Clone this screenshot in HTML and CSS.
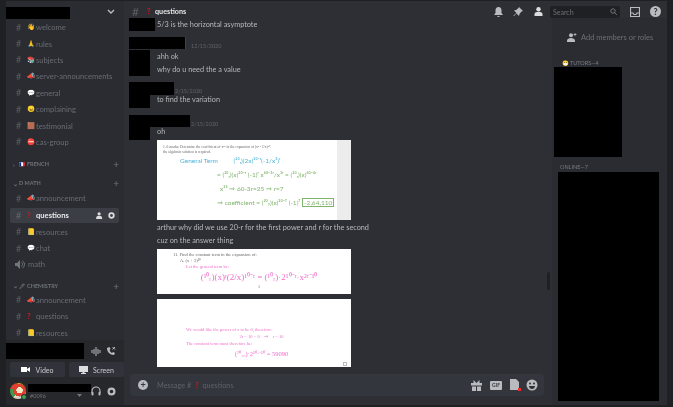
FILE: index.html
```html
<!DOCTYPE html>
<html lang="en">
<head>
    <meta charset="UTF-8">
    <title>questions</title>
    <link rel="stylesheet" href="styles.css">
</head>
<body>
    <div class="app">
        <aside class="sidebar">
            <div class="server-head">
                <div class="black server-name"></div>
                <svg class="chev" width="8" height="6" viewBox="0 0 8 6"><path d="M1 1l3 3 3-3" fill="none" stroke="#b9bbbe" stroke-width="1.4"/></svg>
            </div>
            <div class="channels">
                <div class="chan"><span class="hash">#</span><span class="emo">👋</span>welcome</div>
                <div class="chan"><span class="hash">#</span><span class="emo">🙏</span>rules</div>
                <div class="chan"><span class="hash">#</span><span class="emo">📚</span>subjects</div>
                <div class="chan"><span class="hash">#</span><span class="emo">📣</span>server-announcements</div>
                <div class="chan"><span class="hash">#</span><span class="emo">💬</span>general</div>
                <div class="chan"><span class="hash">#</span><span class="emo">😠</span>complaining</div>
                <div class="chan"><span class="hash">#</span><span class="emo">🟫</span>testimonial</div>
                <div class="chan"><span class="hash">#</span><span class="emo">⛔</span>cas-group</div>

                <div class="cat cat-fr"><span class="caret">›</span><span class="cat-emo">🇫🇷</span>FRENCH<span class="plus">+</span></div>
                <div class="cat"><span class="caret">⌄</span>D MATH<span class="plus">+</span></div>
                <div class="chan"><span class="hash">#</span><span class="emo">📣</span>announcement</div>
                <div class="chan active"><span class="hash">#</span><span class="emo red">?</span>questions
                    <span class="row-icons">
                        <svg width="8" height="7" viewBox="0 0 9 8"><circle cx="3.5" cy="2" r="1.8" fill="#dcddde"/><path d="M0 8c0-3 1.500-3.600 3.500-3.600S7 5 7 8z" fill="#dcddde"/></svg>
                        <svg width="7" height="7" viewBox="0 0 8 8"><circle cx="4" cy="4" r="2.600" fill="none" stroke="#dcddde" stroke-width="2"/></svg>
                    </span>
                </div>
                <div class="chan"><span class="hash">#</span><span class="emo">📒</span>resources</div>
                <div class="chan"><span class="hash">#</span><span class="emo">💬</span>chat</div>
                <div class="chan voice">
                    <svg class="speaker" width="10" height="9" viewBox="0 0 10 9"><path d="M0 3h2l3-3v9L2 6H0z" fill="#72767d"/><path d="M6.500 2.500a2.500 2.500 0 010 4M7.500 1a4 4 0 010 7" fill="none" stroke="#72767d"/></svg>math
                </div>

                <div class="cat cat-chem"><span class="caret">⌄</span><span class="cat-emo">🖊</span>CHEMISTRY<span class="plus">+</span></div>
                <div class="chan"><span class="hash">#</span><span class="emo">📣</span>announcement</div>
                <div class="chan"><span class="hash">#</span><span class="emo red">?</span>questions</div>
                <div class="chan"><span class="hash">#</span><span class="emo">📒</span>resources</div>
            </div>

            <div class="voice-panel">
                <div class="voice-top">
                    <div class="black voice-name"></div>
                    <svg width="10" height="9" viewBox="0 0 10 9"><path d="M1 3v3M3 2v5M5 0v9M7 2v5M9 3v3" stroke="#b9bbbe" fill="none"/></svg>
                    <svg width="10" height="10" viewBox="0 0 10 10"><path d="M1 2c0 4 3 7 7 7l1-2-2-1-1 1C5 6.500 4 5.500 3.500 4l1-1-1-2z" fill="#b9bbbe"/><path d="M6.500 1l2.500 2.500M9 1L6.500 3.500" stroke="#b9bbbe"/></svg>
                </div>
                <div class="voice-btns">
                    <div class="vbtn"><svg width="9" height="7" viewBox="0 0 9 7"><path d="M0 1h6v5H0zM6 3l3-2v5L6 4z" fill="#fff"/></svg>Video</div>
                    <div class="vbtn"><svg width="9" height="8" viewBox="0 0 9 8"><path d="M0 0h9v6H5.500v1H7v1H2V7h1.500V6H0z" fill="#dcddde"/></svg>Screen</div>
                </div>
            </div>

            <div class="user-bar">
                <div class="avatar"><i class="status"></i></div>
                <div class="user-text">
                    <div class="black user-name"></div>
                    <div class="user-tag">#0096</div>
                </div>
                <svg class="user-caret" width="7" height="5" viewBox="0 0 7 5"><path d="M1 1l2.500 3L6 1z" fill="#72767d"/></svg>
                <svg width="10" height="10" viewBox="0 0 10 10"><path d="M1 7V5a4 4 0 018 0v2" fill="none" stroke="#b9bbbe" stroke-width="1.200"/><rect x=".5" y="6" width="2" height="3.500" rx=".8" fill="#b9bbbe"/><rect x="7.500" y="6" width="2" height="3.500" rx=".8" fill="#b9bbbe"/></svg>
                <svg width="9" height="9" viewBox="0 0 9 9"><circle cx="4.500" cy="4.500" r="2.900" fill="none" stroke="#b9bbbe" stroke-width="2.200"/></svg>
            </div>
        </aside>

        <div class="main">
            <header class="topbar">
                <span class="top-hash">#</span><span class="top-q">?</span><span class="top-title">questions</span>
                <div class="top-right">
                    <svg width="9" height="10" viewBox="0 0 9 10"><path d="M4.500 0c2 0 3 1.500 3 3.500V6L9 8H0l1.500-2V3.500C1.500 1.500 2.500 0 4.500 0zM3.500 9h2v1h-2z" fill="#b9bbbe"/></svg>
                    <svg width="10" height="10" viewBox="0 0 10 10"><path d="M6 0l4 4-1.500.5L6.500 7 6 9 3.500 6.500 1 9 .5 9 .5 8.500l3-2.500L1 3.500 3 3l2.500-2z" fill="#b9bbbe"/></svg>
                    <svg width="11" height="9" viewBox="0 0 11 9"><circle cx="5.500" cy="2.300" r="2.200" fill="#dcddde"/><path d="M1.500 9V7c0-1.500 2-2.300 4-2.300s4 .8 4 2.300v2z" fill="#dcddde"/></svg>
                    <div class="search"><span>Search</span><svg width="7" height="7" viewBox="0 0 7 7"><circle cx="3" cy="3" r="2.200" fill="none" stroke="#72767d"/><path d="M4.500 4.500L6.800 6.800" stroke="#72767d"/></svg></div>
                    <svg width="10" height="10" viewBox="0 0 10 10"><path d="M.5.500h9v9h-9zM.5 6h2.500l1 1.500h2l1-1.500h2.500" fill="none" stroke="#b9bbbe" stroke-width="1.200"/></svg>
                    <div class="help">?</div>
                </div>
            </header>

            <div class="body-row">
                <section class="chat">
                    <div class="messages">
                        <div class="first">
                            <div class="black blk-top"></div>
                            <p class="m-first">5/3 is the horizontal asymptote</p>
                        </div>
                        <div class="m-ahh">
                            <div class="msg-head"><div class="black nm-a"></div><span class="time">12/15/2020</span></div>
                            <div class="msg-body"><div class="black av"></div><div class="lines"><p>ahh ok</p><p>why do u need the a value</p></div></div>
                        </div>
                        <div class="m-find">
                            <div class="msg-head"><div class="black nm-b"></div><span class="time tight">2/15/2020</span></div>
                            <div class="msg-body"><div class="black av short"></div><div class="lines up"><p>to find the variation</p></div></div>
                        </div>
                        <div class="m-oh">
                            <div class="msg-head"><div class="black nm-c"></div><span class="time tight">2/15/2020</span></div>
                            <div class="msg-body"><div class="black av short"></div><div class="lines up"><p>oh</p></div></div>
                            <div class="attach">
                                <div class="sheet green-sheet">
                                    <div class="print">1. 6 marks: Determine the coefficient of x²⁵ in the expansion of (x² - 2/x)²⁰.</div>
                                    <div class="print">the algebraic solution is required.</div>
                                    <div class="hand blue">General Term <b>(²⁰ᵣ)(2x)²⁰⁻ʳ(-1/x³)ʳ</b></div>
                                    <div class="hand l2">= (²⁰ᵣ)(x)²⁰⁻ʳ (-1)ʳ x⁶⁰⁻³ʳ/x³ʳ = (²⁰ᵣ)(x)⁶⁰⁻⁴ʳ</div>
                                    <div class="hand l3">x²⁵ ⇒ 60-3r=25 ⇒ r=7</div>
                                    <div class="hand l2">⇒ coefficient = (²⁰₇)(x)²⁰⁻⁷ (-1)⁷ <span class="boxed">-2,64,110</span></div>
                                </div>
                                <p>arthur why did we use 20-r for the first power and r for the second</p>
                                <p>cuz on the answer thing</p>
                                <div class="sheet pink-top">
                                    <div class="print">11. Find the constant term in the expansion of:</div>
                                    <div class="print ind">A. (x + 2)¹⁰</div>
                                    <div class="pink ind2">Let the general term be:</div>
                                    <div class="pink center big wide">(¹⁰ᵣ)(x)ʳ(2/x)¹⁰⁻ʳ = (¹⁰ᵣ)·2¹⁰⁻ʳ·x²ʳ⁻¹⁰</div>
                                    <div class="pagenum">1</div>
                                </div>
                                <div class="sheet pink-bot">
                                    <div class="pink ind3">We would like the power of x to be 0, therefore:</div>
                                    <div class="pink center">2r − 10 = 0 &nbsp;&nbsp; ⇒ &nbsp;&nbsp; r = 10</div>
                                    <div class="pink ind3">The constant term must therefore be:</div>
                                    <div class="pink center big">(²⁰₁₀)·2¹⁰·⁻¹⁰ = 59090</div>
                                    <i class="corner"></i>
                                </div>
                            </div>
                        </div>
                    </div>
                    <div class="composer">
                        <div class="add">+</div>
                        <div class="placeholder">Message #<span class="q">?</span>questions</div>
                        <div class="comp-icons">
                            <svg width="11" height="11" viewBox="0 0 11 11"><path d="M0 3h11v2.500H0zM1 6.500h4V11H1zM6 6.500h4V11H6zM2.500 0l3 3h-3zM8.500 0l-3 3h3z" fill="#b9bbbe"/></svg>
                            <div class="gif">GIF</div>
                            <div class="file"><svg width="10" height="12" viewBox="0 0 10 12"><path d="M0 0h6l3 3v8H0z" fill="#b9bbbe"/></svg><i></i></div>
                            <svg class="smile" width="12" height="12" viewBox="0 0 12 12"><circle cx="6" cy="6" r="5.500" fill="#b9bbbe"/><circle cx="4" cy="4.500" r="1" fill="#2f3136"/><circle cx="8" cy="4.500" r="1" fill="#2f3136"/><path d="M3 7h6c0 2-1.500 3-3 3s-3-1-3-3z" fill="#2f3136"/></svg>
                        </div>
                    </div>
                    <div class="scroll-thumb"></div>
                </section>

                <aside class="members">
                    <div class="add-members">
                        <svg width="10" height="9" viewBox="0 0 10 9"><circle cx="4" cy="2.200" r="2" fill="#b9bbbe"/><path d="M0 9V7.500C0 6 2 5 4 5s4 1 4 2.500V9z" fill="#b9bbbe"/><path d="M8 0v3M6.500 1.500h3" stroke="#b9bbbe" stroke-width=".8"/></svg>
                        <span>Add members or roles</span>
                    </div>
                    <div class="group-title tutors-title"><span class="emo-s">😷</span>TUTORS—4</div>
                    <div class="black tutors"></div>
                    <div class="group-title online">ONLINE—7</div>
                    <div class="black online-list"></div>
                </aside>
            </div>
        </div>
    </div>
</body>
</html>
```

FILE: styles.css
```css
* {
    box-sizing: border-box;
}
html, body {
    margin: 0;
    height: 100%;
    overflow: hidden;
}
body {
    font-family: Lato, "Open Sans", sans-serif;
    background: #1f2023;
    color: #b9bbbe;
    filter: blur(0.5px);
}
p {
    margin: 0;
}
.black {
    background: #000;
}
.app {
    display: flex;
    height: 405px;
    padding: 1px 6px 0;
}

/* left column */
.sidebar {
    width: 118px;
    display: flex;
    flex-direction: column;
    background: #2a2c31;
    flex: none;
}
.server-head {
    height: 18px;
    flex: none;
    display: flex;
    align-items: flex-start;
    justify-content: space-between;
    padding: 6px 9px 0 0;
}
.server-name {
    width: 64px;
    height: 12px;
}
.chev {
    margin-top: 2px;
}
.channels {
    flex: 1;
    padding-left: 4px;
    overflow: hidden;
}
.chan {
    height: 16.4px;
    display: flex;
    align-items: center;
    font-size: 7.600px;
    color: #686c72;
    white-space: nowrap;
}
.hash {
    width: 17px;
    padding-left: 6px;
    font-size: 9px;
    color: #5a5d63;
}
.emo {
    width: 9px;
    font-size: 6.500px;
}
.emo.red {
    color: #d9141c;
    font-weight: 700;
    font-size: 8px;
}
.chan.active {
    background: #3b3e44;
    border-radius: 2px;
    color: #e8e9ea;
    width: 109px;
    height: 15px;
    margin: 1px 0;
    font-weight: 700;
}
.row-icons {
    margin-left: auto;
    margin-right: 4px;
    display: flex;
    align-items: center;
    gap: 4px;
}
.voice {
    padding-left: 5px;
}
.speaker {
    margin-right: 3px;
}
.cat {
    height: 14px;
    margin-top: 5px;
    margin-right: 5px;
    display: flex;
    align-items: center;
    font-size: 5.500px;
    font-weight: 700;
    color: #6f7379;
}
.cat-fr {
    margin-top: 7px;
}
.cat-chem {
    height: 12px;
    margin-top: 7px;
}
.caret {
    width: 6px;
    margin-left: 3px;
    font-size: 6px;
}
.cat-emo {
    font-size: 5px;
    margin-right: 2px;
}
.plus {
    margin-left: auto;
    font-size: 10px;
    font-weight: 400;
    color: #72767d;
}
.voice-panel {
    height: 37px;
    flex: none;
    background: #26282c;
    padding-top: 3px;
}
.voice-top {
    display: flex;
    align-items: center;
    gap: 5px;
}
.voice-name {
    width: 78px;
    height: 16px;
    margin-right: 2px;
}
.voice-btns {
    display: flex;
    gap: 4px;
    padding: 3px 0 0 4px;
}
.vbtn {
    flex: 1;
    height: 15px;
    background: #30333a;
    border-radius: 2px;
    display: flex;
    align-items: center;
    justify-content: center;
    gap: 5px;
    font-size: 7px;
    color: #c8c9cb;
}
.user-bar {
    height: 28px;
    flex: none;
    background: #26282c;
    display: flex;
    align-items: center;
    gap: 6px;
    padding: 0 3px 0 4px;
    position: relative;
}
.avatar {
    width: 16px;
    height: 16px;
    border-radius: 50%;
    background:
        radial-gradient(circle at 60% 45%, #f2e9c9 0 24%, #e0402e 25% 48%, transparent 49%),
        conic-gradient(#e9c23a 0 30%, #d9d4c3 30% 60%, #3d9b49 60% 80%, #e0402e 80% 100%);
    position: relative;
    flex: none;
    margin-right: -4px;
}
.status {
    position: absolute;
    right: -1px;
    bottom: -1px;
    width: 6px;
    height: 6px;
    border-radius: 50%;
    background: #3ba55d;
    border: 1px solid #26282c;
}
.user-text {
    width: 63px;
    padding-top: 1px;
    margin-right: -6px;
}
.user-name {
    width: 63px;
    height: 8px;
}
.user-tag {
    font-size: 5.500px;
    line-height: 8px;
    color: #6f7379;
    margin-left: 2px;
}
.user-caret {
    position: absolute;
    left: 70px;
    top: 16px;
}

/* header */
.main {
    flex: 1;
    display: flex;
    flex-direction: column;
    min-width: 0;
    background: #2d2f34;
}
.topbar {
    height: 17px;
    flex: none;
    display: flex;
    align-items: center;
    padding: 4px 0 0 8px;
    font-size: 7.500px;
}
.top-hash {
    width: 15px;
    font-size: 12px;
    color: #5a5d63;
}
.top-q {
    width: 8px;
    color: #d9141c;
    font-weight: 700;
}
.top-title {
    font-weight: 700;
    color: #e4e5e6;
    font-size: 7.200px;
}
.top-right {
    margin-left: auto;
    display: flex;
    align-items: center;
    gap: 10px;
    padding-right: 6px;
}
.search {
    width: 70px;
    height: 12px;
    background: #1f2023;
    border-radius: 2px;
    display: flex;
    align-items: center;
    justify-content: space-between;
    padding: 0 3px;
    font-size: 7px;
    color: #6b6f75;
    margin-left: -4px;
}
.help {
    width: 11px;
    height: 11px;
    border-radius: 50%;
    background: #b9bbbe;
    color: #2d2f34;
    font-size: 9px;
    font-weight: 700;
    line-height: 11px;
    text-align: center;
}
.body-row {
    flex: 1;
    display: flex;
    min-height: 0;
}

/* messages */
.chat {
    width: 428px;
    flex: none;
    display: flex;
    flex-direction: column;
    position: relative;
}
.messages {
    flex: 1;
    min-height: 0;
    padding-left: 5px;
    overflow: hidden;
    font-size: 7.300px;
    color: #b5b7ba;
}
.first {
    display: flex;
    gap: 2px;
}
.blk-top {
    width: 26px;
    height: 13px;
}
.m-first {
    line-height: 13px;
}
.m-ahh {
    margin-top: 6px;
}
.m-find {
    margin-top: 6.500px;
}
.m-oh {
    margin-top: 7px;
}
.msg-head {
    display: flex;
    height: 12.500px;
}
.nm-a {
    width: 57px;
    height: 12px;
    border-right: 1px solid #5a2a7a;
}
.nm-b {
    width: 45px;
    height: 12.500px;
}
.nm-c {
    width: 61px;
    height: 12.500px;
}
.time {
    font-size: 5.500px;
    line-height: 6px;
    color: #5f6268;
    margin: 6px 0 0 5px;
}
.time.tight {
    margin-left: 1px;
}
.msg-body {
    display: flex;
    gap: 7px;
}
.av {
    width: 21px;
    height: 26px;
    flex: none;
}
.av.short {
    height: 13px;
}
.lines p {
    height: 13px;
    line-height: 13px;
}
.lines.up {
    margin-top: -2px;
}
.attach {
    padding-left: 28px;
    line-height: 12.700px;
}
.sheet {
    width: 194px;
    background: #fff;
    overflow: hidden;
    position: relative;
}
.green-sheet {
    height: 80px;
    margin-bottom: 2px;
    border-right: 14px solid #ececec;
    padding-top: 5px;
    color: #80b46c;
}
.print {
    font-size: 3.600px;
    line-height: 4.500px;
    color: #666;
    font-family: "Liberation Serif", serif;
    padding-left: 6px;
    white-space: nowrap;
}
.hand {
    font-size: 6.500px;
    line-height: 14px;
    white-space: nowrap;
}
.hand.blue {
    color: #4fb5d6;
    padding-left: 23px;
}
.hand b {
    font-weight: 400;
    margin-left: 14px;
}
.l2 {
    padding-left: 60px;
}
.l3 {
    padding-left: 63px;
}
.boxed {
    border: 1px solid #80b46c;
    padding: 0 1px;
}
.pink-top {
    height: 45px;
    margin-top: 2px;
    padding: 3px 0 0 10px;
}
.pink-top .print {
    font-size: 4.500px;
    line-height: 5.500px;
}
.ind {
    padding-left: 13px;
}
.pink {
    color: #ee6fc8;
    font-family: "Liberation Serif", serif;
    font-size: 4.500px;
    line-height: 7px;
    white-space: nowrap;
}
.ind2 {
    padding-left: 19px;
}
.center {
    text-align: center;
}
.big {
    font-size: 6.500px;
    line-height: 14px;
}
.big.wide {
    font-size: 9px;
}
.pagenum {
    font-size: 4px;
    line-height: 5px;
    text-align: center;
    color: #555;
    font-family: "Liberation Serif", serif;
}
.pink-bot {
    height: 68px;
    margin-top: 5px;
    padding-top: 27px;
}
.ind3 {
    padding-left: 29px;
}
.pink-bot .center {
    padding-left: 15px;
}
.corner {
    position: absolute;
    right: 4px;
    bottom: 1px;
    width: 4px;
    height: 4px;
    border: 1px solid #bbb;
}

/* composer */
.composer {
    height: 22px;
    flex: none;
    margin: 0 8px 9px 6px;
    border-radius: 4px;
    background: #33363c;
    display: flex;
    align-items: center;
    padding: 0 6px 0 8px;
    font-size: 7.300px;
    color: #5f6268;
}
.add {
    width: 10px;
    height: 10px;
    border-radius: 50%;
    background: #b9bbbe;
    color: #33363c;
    font-weight: 700;
    font-size: 9px;
    line-height: 10px;
    text-align: center;
}
.placeholder {
    margin-left: 9px;
}
.q {
    color: #d9141c;
    font-weight: 700;
    margin: 0 4px;
}
.comp-icons {
    margin-left: auto;
    display: flex;
    align-items: center;
    gap: 8px;
}
.smile {
    margin-left: -2px;
}
.gif {
    width: 12px;
    height: 9px;
    background: #b9bbbe;
    border-radius: 1px;
    color: #33363c;
    font-size: 5px;
    font-weight: 700;
    line-height: 9px;
    text-align: center;
}
.file {
    position: relative;
    height: 12px;
}
.file i {
    position: absolute;
    right: -1px;
    bottom: 0;
    width: 3px;
    height: 3px;
    background: #ed2c2c;
}
.scroll-thumb {
    position: absolute;
    right: 2px;
    top: 254px;
    width: 3px;
    height: 18px;
    border-radius: 2px;
    background: #1f2023;
}

/* members */
.members {
    width: 115px;
    flex: none;
    background: #2a2c31;
    padding-top: 12px;
}
.add-members {
    display: flex;
    align-items: center;
    gap: 4px;
    padding-left: 15px;
    font-size: 7.500px;
    color: #6b6f75;
    height: 14px;
}
.group-title {
    font-size: 5.500px;
    line-height: 7px;
    color: #777b81;
}
.tutors-title {
    margin-top: 16px;
    padding-left: 10px;
}
.emo-s {
    margin-right: 1px;
}
.tutors {
    width: 68px;
    height: 90px;
    margin-left: 2px;
}
.group-title.online {
    margin-top: 7px;
    padding-left: 8px;
}
.online-list {
    width: 101px;
    height: 229px;
    margin-top: 1px;
    margin-left: 6px;
}
```
